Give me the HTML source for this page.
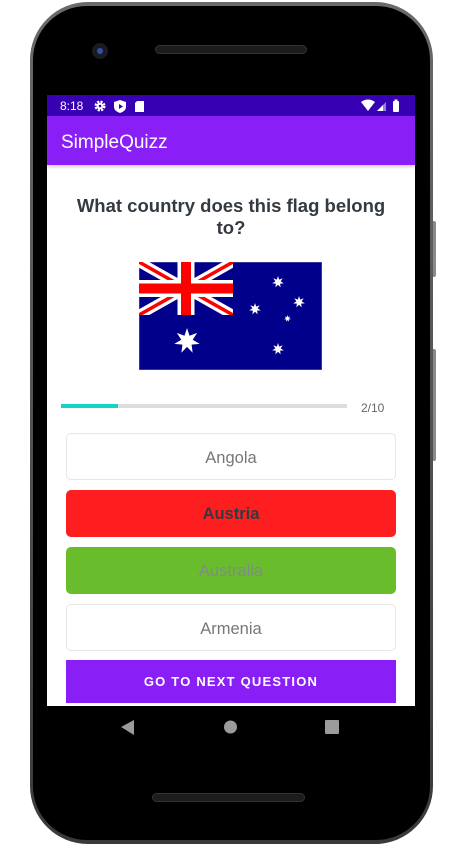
<!DOCTYPE html>
<html><head><meta charset="utf-8"><style>
*{margin:0;padding:0;box-sizing:border-box}
html,body{width:466px;height:862px;background:#fff;overflow:hidden;font-family:"Liberation Sans",sans-serif}
.phone{position:absolute;left:30px;top:2px;width:403px;height:842px;border-radius:58px;background:linear-gradient(#6a6a6a,#3a3a3a);}
.inner{position:absolute;left:33px;top:6px;width:397px;height:834px;border-radius:54px;background:#000}
.btn1{position:absolute;left:431px;top:221px;width:5px;height:56px;background:#8a8a8a;border-radius:2px}
.btn2{position:absolute;left:431px;top:349px;width:5px;height:112px;background:#8a8a8a;border-radius:2px}
.cam{position:absolute;left:92px;top:43px;width:16px;height:16px;border-radius:50%;background:#1a1a22}
.cam:after{content:"";position:absolute;left:5px;top:5px;width:6px;height:6px;border-radius:50%;background:#3050b0}
.spk{position:absolute;left:155px;top:45px;width:152px;height:9px;border-radius:5px;background:#1c1c1c;border:1px solid #333}
.spk2{position:absolute;left:152px;top:793px;width:153px;height:9px;border-radius:5px;background:#1c1c1c;border:1px solid #333}
.screen{position:absolute;left:47px;top:95px;width:368px;height:611px;background:#fff;overflow:hidden}
.status{height:21px;background:#3700b3;color:#fff;font-size:12px;position:relative}
.appbar{height:49px;background:#8a1ef7;color:#fff;font-size:19px;padding:16px 0 0 14px;box-shadow:0 2px 3px rgba(0,0,0,.2);position:relative}
.q{position:absolute;top:100px;left:0;width:368px;text-align:center;font-weight:bold;font-size:18.5px;line-height:22px;color:#333a40}
.prog{position:absolute;left:14px;top:309px;width:286px;height:4px;background:#ddd}
.prog i{display:block;width:57px;height:4px;background:#13d4c4}
.cnt{position:absolute;left:314px;top:306px;font-size:12px;color:#666}
.opt{position:absolute;left:19px;width:330px;height:47px;border-radius:5px;text-align:center;line-height:48px;font-size:16.5px;color:#777}
.w{background:#fff;border:1px solid #e6e6e6}
.next{position:absolute;left:19px;top:565px;width:330px;height:43px;background:#8a1ef7;color:#fff;font-weight:bold;font-size:13px;letter-spacing:1.2px;text-align:center;line-height:44px}
</style></head><body>
<div class="btn1"></div><div class="btn2"></div>
<div class="phone"></div><div class="inner"></div>
<div class="cam"></div><div class="spk"></div><div class="spk2"></div>
<svg style="position:absolute;left:0;top:706px" width="466" height="40">
<polygon points="121,21 134,14 134,29" fill="#9b9b9b"/>
<circle cx="230.5" cy="21" r="6.5" fill="#9b9b9b"/>
<rect x="325" y="14" width="14" height="14" rx="1" fill="#9b9b9b"/>
</svg>
<div class="screen">
 <div class="status">
  <span style="position:absolute;left:13px;top:4px">8:18</span>
  <svg style="position:absolute;left:46px;top:4px" width="60" height="14">
   <circle cx="7" cy="7" r="4" fill="none" stroke="#fff" stroke-width="3" stroke-dasharray="2 1.2"/><circle cx="7" cy="7" r="3.3" fill="#fff"/><circle cx="7" cy="7" r="1.3" fill="#3700b3"/>
   <path d="M27 1 L33 3 V8 Q33 12 27 14 Q21 12 21 8 V3 Z" fill="#fff"/><polygon points="26,5 30,7.5 26,10" fill="#3700b3"/>
   <path d="M44 2 H51 V13 H42 V4 Z" fill="#fff"/>
  </svg>
  <svg style="position:absolute;left:312px;top:4px" width="50" height="14">
   <path d="M2 3 Q9 -2 16 3 L9 12 Z" fill="#fff"/>
   <polygon points="18,12 27,12 27,3" fill="#9a80d8"/><polygon points="18,12 24,12 24,6" fill="#fff"/>
   <rect x="34" y="2" width="6" height="11" rx="1" fill="#fff"/><rect x="35.5" y="0.5" width="3" height="2" fill="#fff"/>
  </svg>
 </div>
 <div class="appbar">SimpleQuizz</div>
 <div class="q">What country does this flag belong<br>to?</div>
 <svg style="position:absolute;left:92px;top:167px" width="183" height="108" viewBox="0 0 183 108">
  <defs>
   <symbol id="st" viewBox="-1 -1 2 2" overflow="visible"><polygon fill="#fff" points="0,-1 .195,-.405 .782,-.623 .439,-.1 .975,.223 .352,.281 .434,.901 0,.45 -.434,.901 -.352,.281 -.975,.223 -.439,-.1 -.782,-.623 -.195,-.405"/></symbol>
   <clipPath id="c"><rect width="94" height="53"/></clipPath>
  </defs>
  <rect width="183" height="108" fill="#00008b" stroke="#6a6ab0" stroke-width="1"/>
  <g clip-path="url(#c)">
   <path d="M0 0 L94 53 M94 0 L0 53" stroke="#fff" stroke-width="10"/>
   <path d="M0 0 L94 53 M94 0 L0 53" stroke="#f00" stroke-width="3.5"/>
   <path d="M47 0 V53 M0 26.5 H94" stroke="#fff" stroke-width="17"/>
   <path d="M47 0 V53 M0 26.5 H94" stroke="#f00" stroke-width="10"/>
  </g>
  <use href="#st" x="35" y="66" width="26" height="26"/>
  <use href="#st" x="133" y="14" width="12" height="12"/>
  <use href="#st" x="154" y="34" width="12" height="12"/>
  <use href="#st" x="110" y="41" width="12" height="12"/>
  <use href="#st" x="145" y="53" width="7" height="7"/>
  <use href="#st" x="133" y="81" width="12" height="12"/>
 </svg>
 <div class="prog"><i></i></div>
 <div class="cnt">2/10</div>
 <div class="opt w" style="top:338px">Angola</div>
 <div class="opt" style="top:395px;background:#fe1d1f;color:#333a40;font-weight:bold">Austria</div>
 <div class="opt" style="top:452px;background:#69bd2d;color:#808a8a">Australia</div>
 <div class="opt w" style="top:509px">Armenia</div>
 <div class="next">GO TO NEXT QUESTION</div>
</div>
</body></html>
